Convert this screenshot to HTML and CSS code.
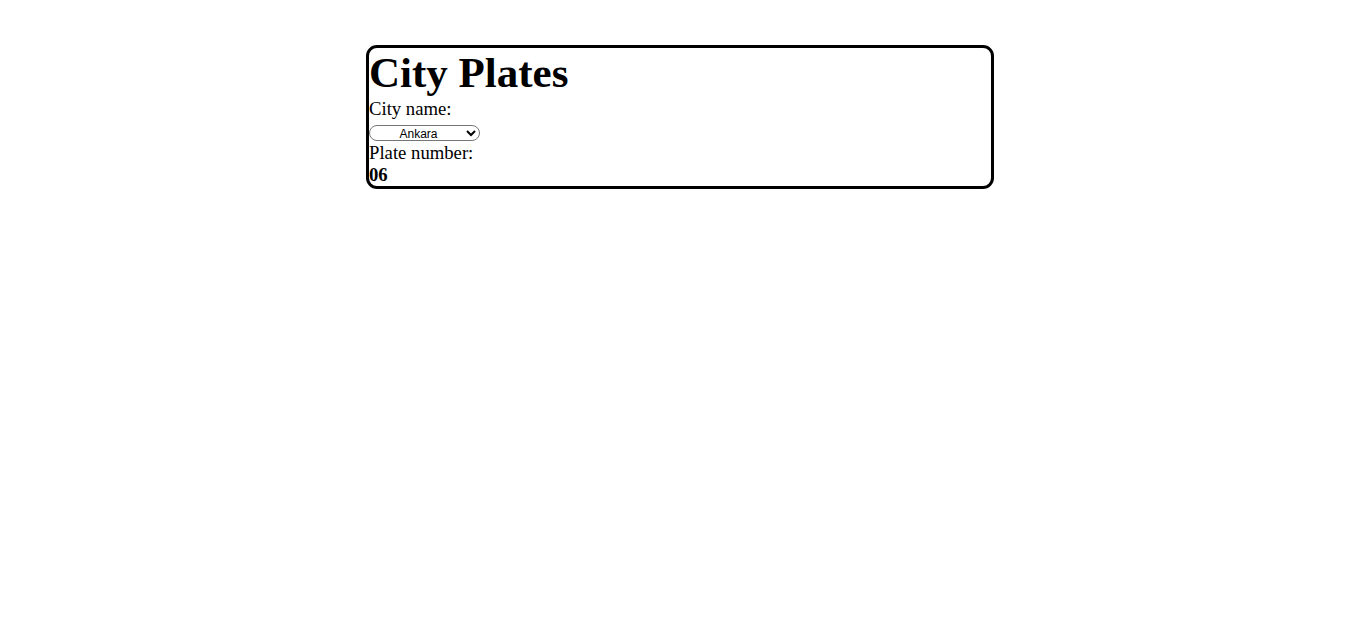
FILE: index.html
```html
<!DOCTYPE html>
<html lang="en">
<head>
    <meta charset="UTF-8">
    <title>City Plates</title>
    <link rel="stylesheet" href="styles.css">
</head>
<body>
<div class="card">
    <h1 class="title">City Plates</h1>
    <div class="label">City name:</div>
    <select class="city">
        <option>Ankara</option>
    </select>
    <div class="label">Plate number:</div>
    <div class="plate">06</div>
</div>
</body>
</html>
```

FILE: styles.css
```css
body{
    margin: 0;
    font-family: "Liberation Serif", serif;
    font-size: 18.7px;
}
.card{
    width: 622px;
    margin: 45px auto 0;
    border: 3px solid #000;
    border-radius: 11px;
}
.title{
    margin: 0;
    font-size: 43px;
    line-height: 50px;
}
.label{
    line-height: 22px;
}
.city{
    display: block;
    width: 111px;
    height: 16px;
    margin: 5px 0 1px;
    padding: 0;
    font-family: "Liberation Sans", sans-serif;
    font-size: 12px;
    text-align: center;
    border: 1px solid #767676;
    border-radius: 8px;
    background: #fff;
}
.plate{
    font-weight: bold;
    line-height: 22px;
}
```
